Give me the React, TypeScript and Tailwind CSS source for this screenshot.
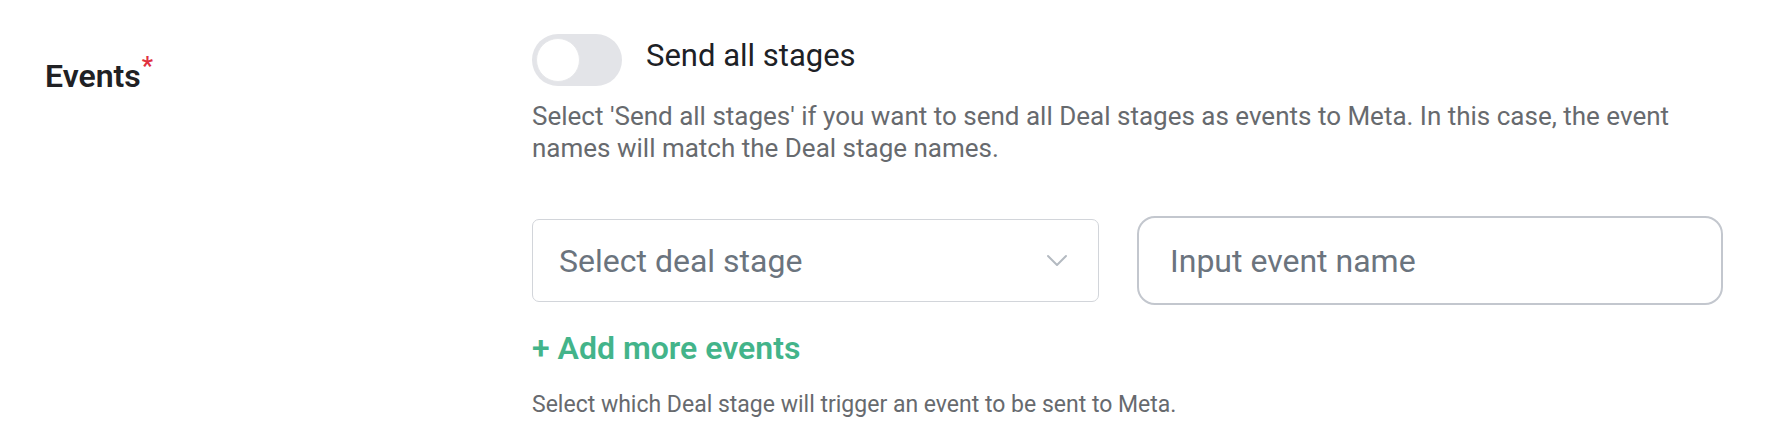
import React from 'react'

const font = { fontFamily: 'Roboto, "Noto Sans", sans-serif' }

function Toggle() {
  return (
    <div className="relative w-[90px] h-[52px] rounded-full bg-[#e3e4e8] shrink-0">
      <div className="absolute left-[4px] top-[4px] w-[44px] h-[44px] rounded-full bg-white border border-[#e6e7ea]" />
    </div>
  )
}

function Chevron() {
  return (
    <svg width="22" height="13" viewBox="0 0 22 13" fill="none">
      <path d="M2 2 L11 11 L20 2" stroke="#b4bac1" strokeWidth="2" strokeLinecap="round" strokeLinejoin="round" />
    </svg>
  )
}

export default function App() {
  return (
    <div className="w-[1776px] h-[444px] bg-white flex pl-[45px]" style={font}>

      {/* label column */}
      <div className="w-[487px] shrink-0 pt-[58px]">
        <div className="text-[32px] leading-[36px] font-semibold text-[#202124]">
          Events
          <span className="relative -top-[12px] ml-[1px] text-[25px] text-[#e0313f] font-semibold">*</span>
        </div>
      </div>

      {/* content column */}
      <div className="w-[1191px] shrink-0 pt-[34px]">
        <div className="flex items-center gap-[24px]">
          <Toggle />
          <span className="text-[31px] leading-[36px] text-[#1d2125] mb-[8px]">Send all stages</span>
        </div>

        <p className="mt-[14px] text-[26px] leading-[32px] text-[#676a6e]">
          Select 'Send all stages' if you want to send all Deal stages as events to Meta. In this case, the event names will match the Deal stage names.
        </p>

        <div className="mt-[52px] flex items-center gap-[38px]">
          <div className="w-[567px] h-[83px] shrink-0 rounded-[7px] border border-[#d2d5da] flex items-center justify-between pl-[26px] pr-[30px]">
            <span className="text-[32px] text-[#6b747e]">Select deal stage</span>
            <Chevron />
          </div>
          <div className="flex-1 h-[89px] rounded-[18px] border-2 border-[#c3c7ce] flex items-center pl-[31px]">
            <span className="text-[32px] text-[#6b747e]">Input event name</span>
          </div>
        </div>

        <div className="mt-[23px] text-[32px] leading-[40px] font-semibold text-[#43b48a]">+ Add more events</div>

        <p className="mt-[21px] text-[23px] leading-[32px] text-[#676a6e]">
          Select which Deal stage will trigger an event to be sent to Meta.
        </p>
      </div>
    </div>
  )
}
